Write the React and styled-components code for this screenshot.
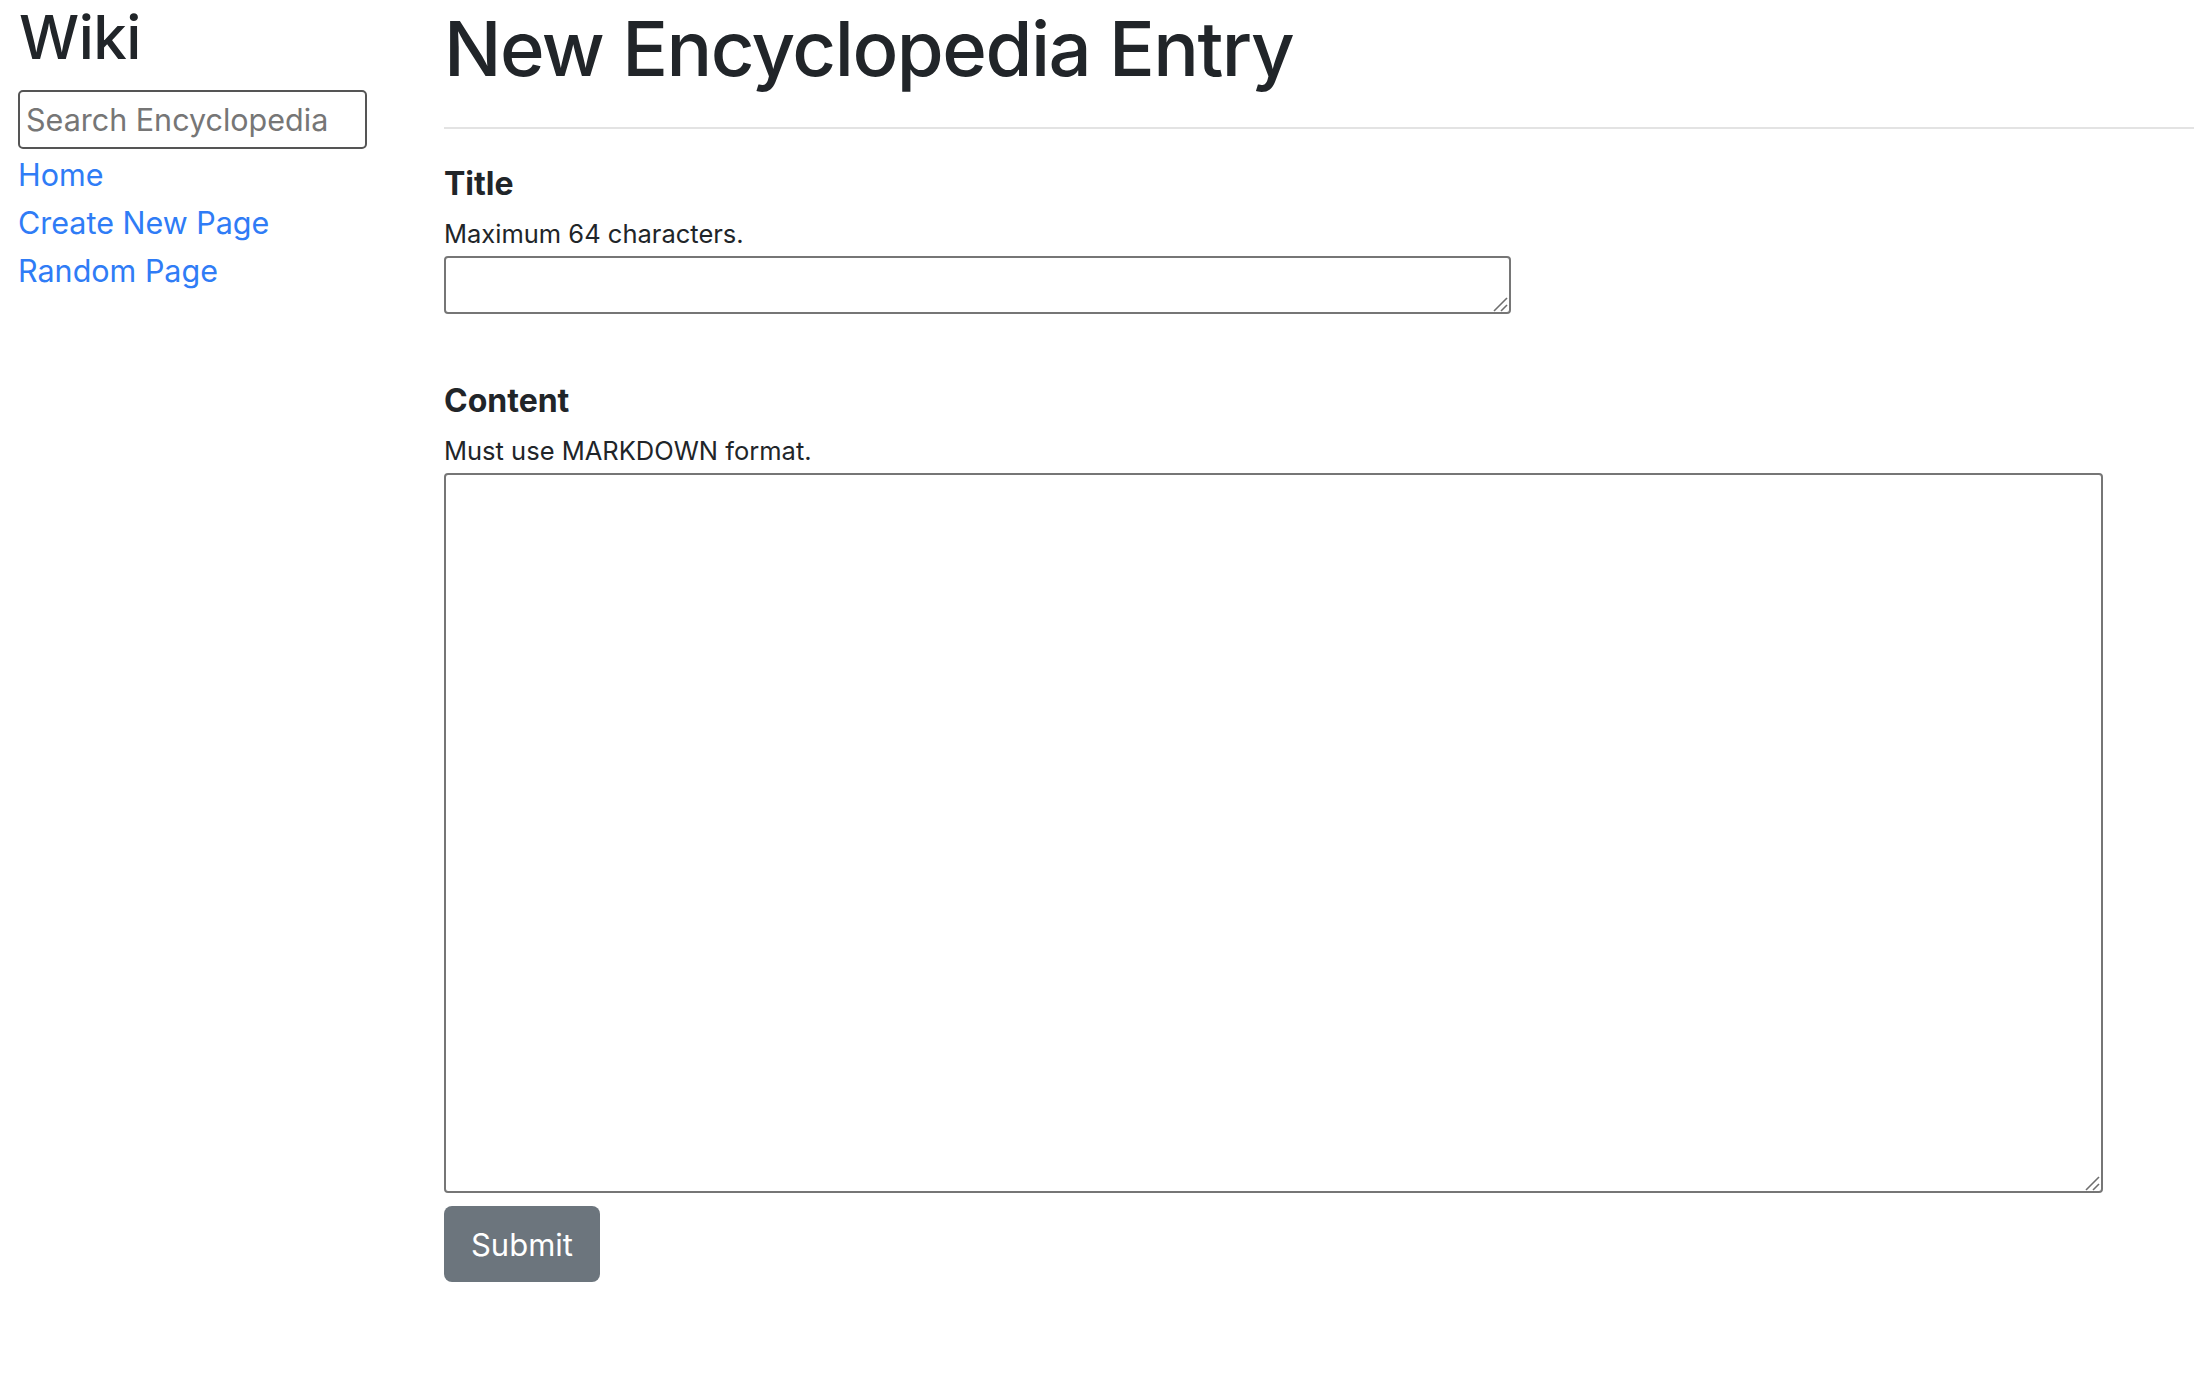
import React from "react";
import styled, { createGlobalStyle } from "styled-components";

const Global = createGlobalStyle`
  html, body { margin: 0; padding: 0; background: #ffffff; }
  body { font-family: Inter, "Noto Sans", sans-serif; color: #212529; }
  * { box-sizing: border-box; }
`;

const Page = styled.div`
  display: flex;
  align-items: flex-start;
  width: 2194px;
  min-height: 1392px;
`;

const Sidebar = styled.aside`
  width: 444px;
  flex: none;
  padding-left: 18px;
  display: flex;
  flex-direction: column;
`;

const Brand = styled.h2`
  margin: 0 0 16px 1px;
  font-size: 60px;
  font-weight: 500;
  line-height: 74px;
  letter-spacing: -0.5px;
  color: #212529;
`;

const SearchInput = styled.input`
  width: 349px;
  height: 59px;
  border: 2px solid #555555;
  border-radius: 5px;
  padding: 0 6px;
  font-family: Inter, sans-serif;
  font-size: 30.5px;
  color: #212529;
  outline: none;
  &::placeholder { color: #767676; }
`;

const NavList = styled.nav`
  margin-top: 2px;
  display: flex;
  flex-direction: column;
`;

const NavLink = styled.a`
  font-size: 30.5px;
  line-height: 48px;
  color: #2f7cf6;
  text-decoration: none;
`;

const Main = styled.main`
  flex: 1;
  display: flex;
  flex-direction: column;
  align-items: flex-start;
`;

const Heading = styled.h1`
  margin: 0;
  font-size: 76px;
  font-weight: 500;
  line-height: 96px;
  letter-spacing: -1.5px;
  color: #212529;
`;

const Rule = styled.hr`
  align-self: stretch;
  margin: 31px 0 0 0;
  border: 0;
  border-top: 2px solid #e3e3e3;
`;

const Form = styled.form`
  display: flex;
  flex-direction: column;
  align-items: flex-start;
`;

const Label = styled.label`
  margin-top: ${(p) => p.$top}px;
  font-size: 32px;
  font-weight: 700;
  line-height: 38px;
  color: #212529;
`;

const Hint = styled.div`
  margin-top: 12px;
  font-size: 25.5px;
  line-height: 38px;
  color: #212529;
`;

const AreaBox = styled.div`
  position: relative;
  margin-top: 3px;
  width: ${(p) => p.$w}px;
  height: ${(p) => p.$h}px;
`;

const Area = styled.textarea`
  display: block;
  width: 100%;
  height: 100%;
  border: 2px solid #767676;
  border-radius: 4px;
  font-family: Inter, sans-serif;
  font-size: 26px;
  padding: 4px;
  resize: none;
  outline: none;
`;

const Grip = styled.svg`
  position: absolute;
  right: 3px;
  bottom: 2px;
  width: 16px;
  height: 16px;
  pointer-events: none;
`;

const SubmitButton = styled.button`
  margin-top: 13px;
  width: 156px;
  height: 76px;
  border: 0;
  border-radius: 8px;
  background: #6c757d;
  color: #ffffff;
  font-family: Inter, sans-serif;
  font-size: 31px;
  font-weight: 400;
  cursor: pointer;
`;

function TextBox({ w, h }) {
  return (
    <AreaBox $w={w} $h={h}>
      <Area />
      <Grip viewBox="0 0 16 16">
        <line x1="2" y1="15" x2="15" y2="2" stroke="#6e6e6e" strokeWidth="1.6" />
        <line x1="9" y1="15" x2="15" y2="9" stroke="#6e6e6e" strokeWidth="1.6" />
      </Grip>
    </AreaBox>
  );
}

export default function App() {
  return (
    <>
      <Global />
      <Page>
        <Sidebar>
          <Brand>Wiki</Brand>
          <form>
            <SearchInput type="text" placeholder="Search Encyclopedia" />
          </form>
          <NavList>
            <NavLink href="#">Home</NavLink>
            <NavLink href="#">Create New Page</NavLink>
            <NavLink href="#">Random Page</NavLink>
          </NavList>
        </Sidebar>
        <Main>
          <Heading>New Encyclopedia Entry</Heading>
          <Rule />
          <Form onSubmit={(e) => e.preventDefault()}>
            <Label $top={36}>Title</Label>
            <Hint>Maximum 64 characters.</Hint>
            <TextBox w={1067} h={58} />
            <Label $top={68}>Content</Label>
            <Hint>Must use MARKDOWN format.</Hint>
            <TextBox w={1659} h={720} />
            <SubmitButton type="submit">Submit</SubmitButton>
          </Form>
        </Main>
      </Page>
    </>
  );
}
